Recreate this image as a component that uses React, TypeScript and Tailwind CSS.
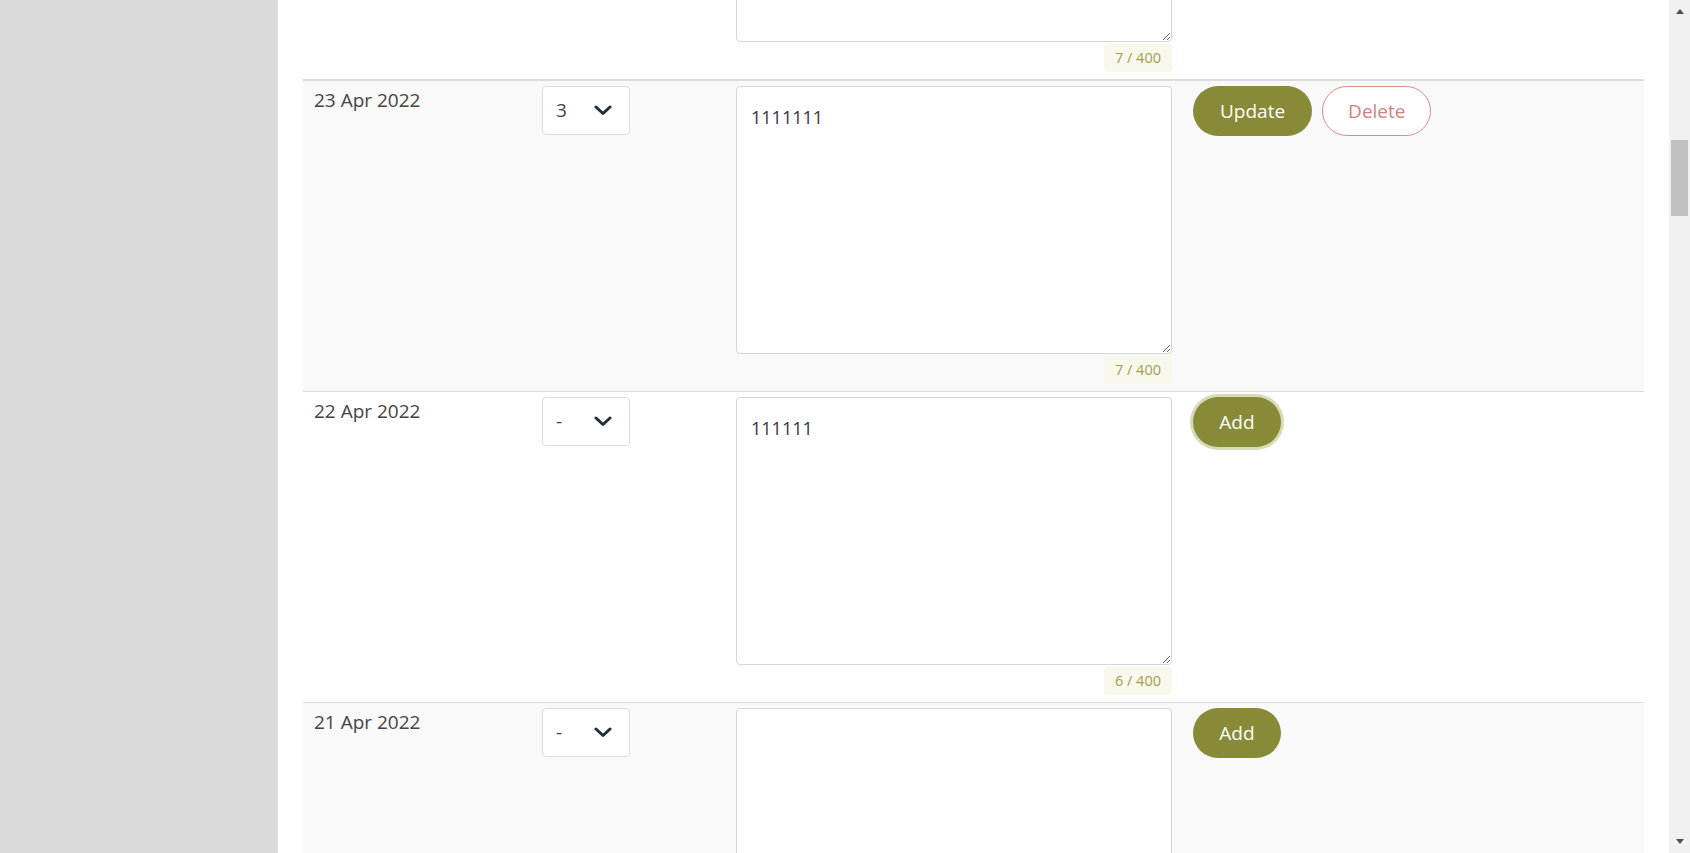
import React from "react";

type Entry = {
  date: string;
  score: string;
  note: string;
  saved: boolean;
  focused?: boolean;
};

const entries: Entry[] = [
  { date: "24 Apr 2022", score: "2", note: "1234567", saved: true },
  { date: "23 Apr 2022", score: "3", note: "1111111", saved: true },
  { date: "22 Apr 2022", score: "-", note: "111111", saved: false, focused: true },
  { date: "21 Apr 2022", score: "-", note: "", saved: false },
];

const Chevron = () => (
  <svg width="18" height="11" viewBox="0 0 18 11" fill="none">
    <polyline
      points="2,2 9,8.5 16,2"
      stroke="#1d2f3c"
      strokeWidth="3"
      strokeLinecap="round"
      strokeLinejoin="round"
    />
  </svg>
);

const Row = ({ entry, index }: { entry: Entry; index: number }) => {
  // alternate stripes, the first visible border is thicker
  const stripe = index % 2 === 1 ? "bg-[#f9f9f9]" : "bg-white";
  const border =
    index === 0 ? "" : index === 1 ? "border-t-2 border-[#dcdcdc]" : "border-t border-[#dcdcdc]";

  return (
    <div className={`grid grid-cols-[228px_194px_457px_1fr] ${stripe} ${border}`}>
      <div className="pl-[11px] pt-[6px] text-[19px] leading-[27px] text-[#444]">
        {entry.date}
      </div>
      <div className="pl-[11px] pt-[5px]">
        <div className="flex h-[49px] w-[88px] items-center justify-between rounded-[4px] border border-[#dcdcdc] bg-white pl-[13px] pr-[17px] text-[19px] text-[#444]">
          <span>{entry.score}</span>
          <Chevron />
        </div>
      </div>
      <div className="flex flex-col items-end pl-[11px] pr-[10px] pb-[7px] pt-[5px]">
        <textarea
          defaultValue={entry.note}
          className="h-[268px] w-full resize-y rounded-[4px] border border-[#d6d6d6] bg-white px-[14px] pb-[14px] pt-[17px] text-[18px] leading-[27px] text-[#3c3147] outline-none"
        />
        <div className="mt-[2px] flex h-[28px] items-center rounded-[4px] bg-[#f8f8ec] px-[11px] text-[14.5px] text-[#a29d4f]">
          {entry.note.length} / 400
        </div>
      </div>
      <div className="flex items-start gap-[10px] pl-[11px] pt-[5px]">
        {entry.saved ? (
          <>
            <button className="h-[50px] rounded-full bg-[#878a37] px-[27px] text-[19px] text-white">
              Update
            </button>
            <button className="h-[50px] rounded-full border border-[#da8b8b] bg-white px-[25px] text-[19px] text-[#d27f7f]">
              Delete
            </button>
          </>
        ) : (
          <button
            className={`h-[50px] w-[88px] rounded-full bg-[#878a37] text-[19px] text-white ${
              entry.focused ? "ring-[3px] ring-[#d9dab9]" : ""
            }`}
          >
            Add
          </button>
        )}
      </div>
    </div>
  );
};

const ScrollTrack = () => (
  <div className="flex w-[21px] shrink-0 flex-col items-center bg-[#f1f1f1]">
    <div className="mt-[9px] h-0 w-0 border-x-[4.5px] border-b-[5px] border-x-transparent border-b-[#505050]" />
    <div className="mt-[126px] h-[76px] w-[17px] bg-[#c1c1c1]" />
    <div className="flex-1" />
    <div className="mb-[9px] h-0 w-0 border-x-[4.5px] border-t-[5px] border-x-transparent border-t-[#505050]" />
  </div>
);

export default function App() {
  return (
    <div className="flex h-[853px] w-full overflow-hidden bg-[#dadada] font-['Open_Sans',sans-serif]">
      <div className="w-[278px] shrink-0" />
      <main className="flex-1 overflow-hidden bg-white px-[25px]">
        <div className="mt-[-231px]">
          {entries.map((entry, i) => (
            <Row key={entry.date} entry={entry} index={i} />
          ))}
        </div>
      </main>
      <ScrollTrack />
    </div>
  );
}
